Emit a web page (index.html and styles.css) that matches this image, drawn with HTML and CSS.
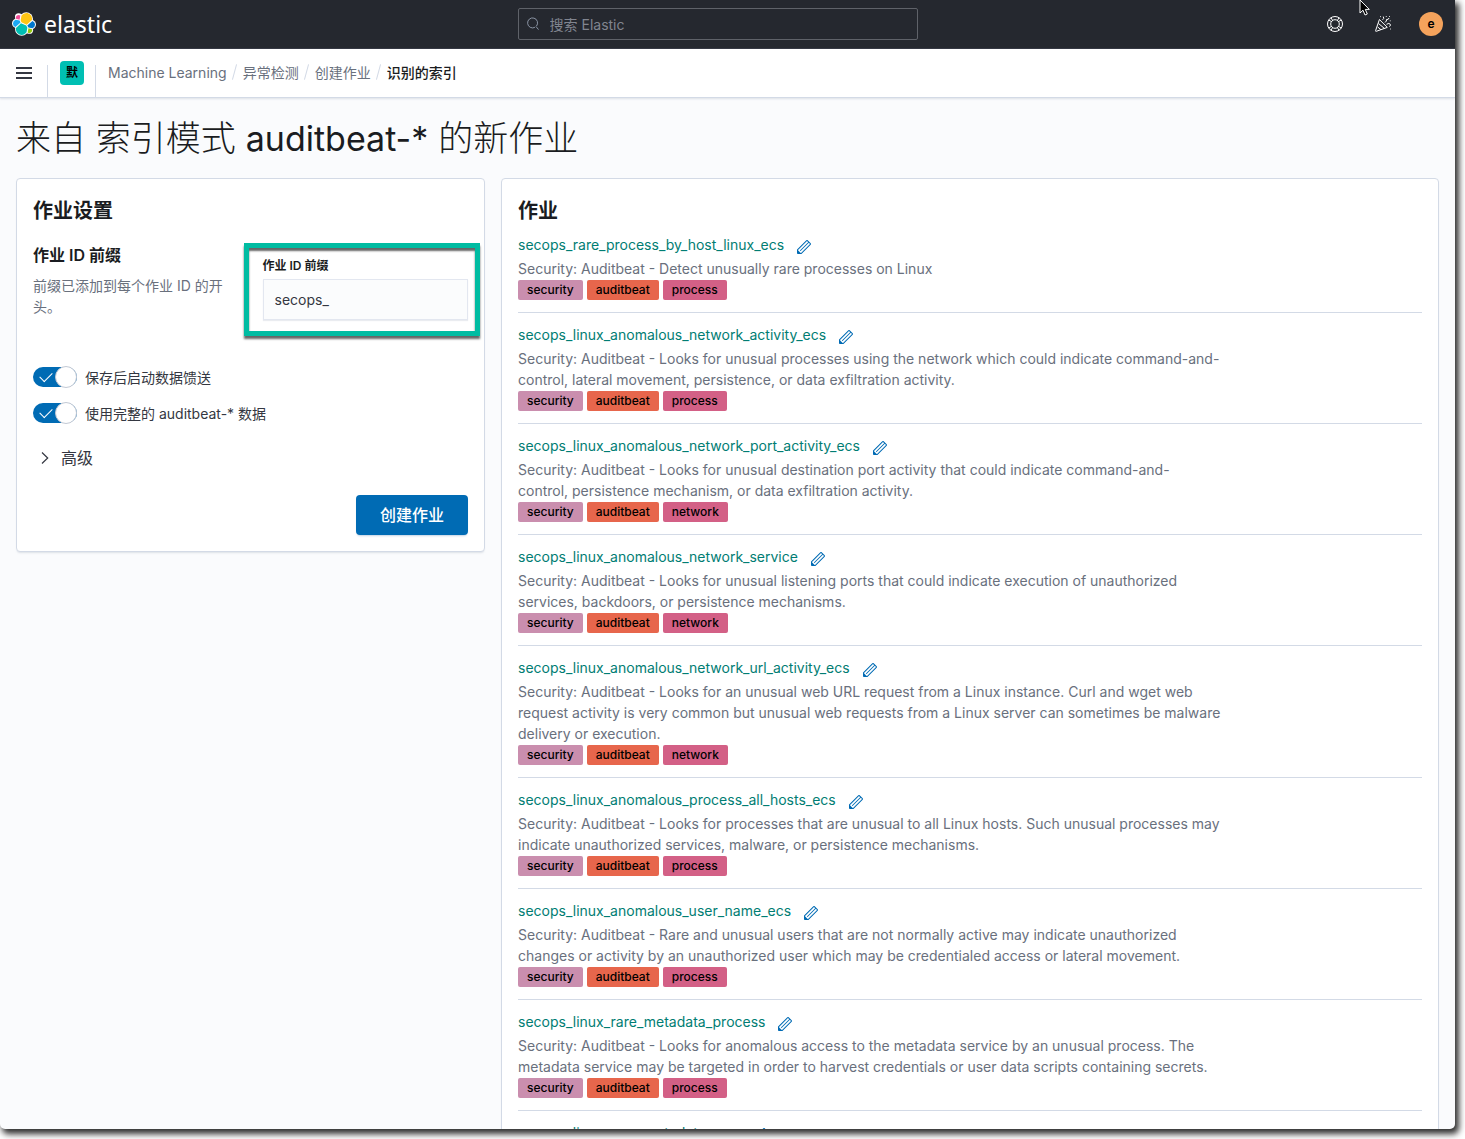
FILE: index.html
```html
<!DOCTYPE html>
<html lang="zh-CN">
<head>
<meta charset="utf-8">
<title>识别的索引 - Elastic</title>
<link rel="stylesheet" href="styles.css">
</head>
<body>
<svg class="sprite" aria-hidden="true">
  <symbol id="pencil" viewBox="0 0 16 16"><path fill-rule="evenodd" d="M12.148 3.148 11 2l-9 9v3h3l9-9-1.144-1.144-8.002 7.998a.502.502 0 0 1-.708 0 .502.502 0 0 1 0-.708l8.002-7.998zM11 1c.256 0 .512.098.707.293l3 3a.999.999 0 0 1 0 1.414l-9 9A.997.997 0 0 1 5 15H2a1 1 0 0 1-1-1v-3c0-.265.105-.52.293-.707l9-9A.997.997 0 0 1 11 1z"/><path d="M1.500 10.800 5.200 14.500H1.500z"/></symbol>
</svg>
<div class="app">
  <header class="topbar">
    <a class="brand" href="#">
      <svg class="brand-mark" viewBox="0 0 32 32" aria-hidden="true">
        <g fill="#fff"><circle cx="19" cy="9.200" r="9"/><circle cx="13" cy="22.800" r="9"/><circle cx="8.800" cy="6.600" r="4.900"/><circle cx="6.500" cy="15.200" r="6.500"/><circle cx="25.500" cy="16.800" r="6.500"/><circle cx="23.200" cy="24.200" r="4.900"/></g>
        <path fill="#fec514" d="M12.580 13.787l7.002 3.211 7.066-6.213a7.849 7.849 0 0 0 .152-1.557c0-4.287-3.464-7.762-7.737-7.762a7.722 7.722 0 0 0-6.377 3.366l-1.176 6.117 1.070 2.838z"/>
        <path fill="#00bfb3" d="M5.333 21.214a7.957 7.957 0 0 0-.15 1.577c0 4.300 3.474 7.786 7.760 7.786 2.578 0 4.992-1.280 6.437-3.420l1.166-6.098-1.556-2.985-7.030-3.214-6.627 6.354z"/>
        <path fill="#f04e98" d="M5.288 9.067l4.800 1.137L11.140 4.730a3.785 3.785 0 0 0-5.850 4.337z"/>
        <path fill="#1ba9f5" d="M4.872 10.214a5.294 5.294 0 0 0-3.595 5.003 5.300 5.300 0 0 0 3.400 4.946l6.733-6.100-1.236-2.650-5.302-1.200z"/>
        <path fill="#93c90e" d="M20.873 27.177a3.758 3.758 0 0 0 2.285.778 3.783 3.783 0 0 0 3.568-5.117l-4.800-1.122-1.053 5.461z"/>
        <path fill="#07c" d="M21.848 20.563l5.280 1.237a5.290 5.290 0 0 0 3.595-5.004 5.295 5.295 0 0 0-3.407-4.940l-6.905 6.054 1.437 2.653z"/>
      </svg>
      <span class="brand-name">elastic</span>
    </a>
    <label class="search">
      <svg class="search-icon" viewBox="0 0 16 16" aria-hidden="true"><path d="M10.200 11.800A5.700 5.700 0 1 1 12 10.300M11.300 10.700l3 3.700"/></svg>
      <input class="search-input" type="search" placeholder="搜索 Elastic" aria-label="搜索 Elastic">
    </label>
    <div class="tools">
      <button class="tool" type="button" aria-label="帮助">
        <svg class="tool-icon" viewBox="0 0 18 18"><circle cx="9" cy="9" r="7.500"/><circle cx="9" cy="9" r="4.300"/><path d="M5 2.800 6.700 5.600M2.800 5 5.600 6.700M13 2.800 11.300 5.600M15.200 5 12.400 6.700M5 15.200 6.700 12.400M2.800 13 5.600 11.300M13 15.200 11.300 12.400M15.200 13 12.400 11.300"/></svg>
      </button>
      <button class="tool" type="button" aria-label="新闻">
        <svg class="tool-icon" viewBox="0 0 18 18"><path d="M5.400 4.500 1.600 15.600q-.2.900.7.700L13.300 12.400zM4.500 8.500l6 5M3.700 12l3.300 2.700M8.500 4.800q2-1 .8-3.200M11 7.500q2-1.500 1.500-3 2 .5 2.500-1.500M12.500 9.300q2.700-1.800 3.800 0 .5 1.800-1 2.200"/><path d="M6 1.600h.8M11.800 1.500h.8M15 1.500h.8M15.800 5.800h.8M16 14h.8"/></svg>
      </button>
      <button class="tool" type="button" aria-label="elastic 用户"><span class="user">e</span></button>
    </div>
  </header>

  <nav class="subbar" aria-label="导航">
    <button class="cell" type="button" aria-label="菜单"><svg class="menu-icon" viewBox="0 0 16 12"><path d="M0 0h16v2H0zM0 5h16v2H0zM0 10h16v2H0z"/></svg></button>
    <button class="cell" type="button" aria-label="默认工作区"><span class="space">默</span></button>
    <ol class="crumbs">
      <li class="crumb"><a class="crumb-link" href="#">Machine Learning</a></li>
      <li class="crumb"><a class="crumb-link" href="#">异常检测</a></li>
      <li class="crumb"><a class="crumb-link" href="#">创建作业</a></li>
      <li class="crumb crumb-current" aria-current="page">识别的索引</li>
    </ol>
  </nav>

  <main class="page">
    <h1 class="page-title">来自 索引模式 <span class="pattern">auditbeat-*</span> 的新作业</h1>
    <div class="columns">
      <form class="panel settings">
        <h2 class="panel-title">作业设置</h2>
        <div class="group">
          <div class="about">
            <h3 class="about-title">作业 ID 前缀</h3>
            <p class="about-text">前缀已添加到每个作业 ID 的开头。</p>
          </div>
          <div class="field">
            <label class="field-label" for="prefix">作业 ID 前缀</label>
            <input class="field-input" id="prefix" type="text" value="secops_">
            <div class="highlight"></div>
          </div>
        </div>
        <div class="switches">
          <label class="switch"><input class="switch-input" type="checkbox" checked><span>保存后启动数据馈送</span></label>
          <label class="switch"><input class="switch-input" type="checkbox" checked><span>使用完整的 auditbeat-* 数据</span></label>
        </div>
        <button class="advanced" type="button"><svg class="chevron" viewBox="0 0 16 16" aria-hidden="true"><path d="M5 2.500 10.700 8 5 13.500"/></svg>高级</button>
        <button class="submit" type="button">创建作业</button>
      </form>

      <section class="panel jobs">
        <h2 class="panel-title">作业</h2>
        <ul class="job-list">
          <li class="job">
            <div class="job-head"><a class="job-id" href="#">secops_rare_process_by_host_linux_ecs</a><button class="edit" type="button" aria-label="编辑"><svg class="edit-icon"><use href="#pencil"/></svg></button></div>
            <p class="job-text">Security: Auditbeat - Detect unusually rare processes on Linux</p>
            <div class="badges"><span class="badge security">security</span><span class="badge auditbeat">auditbeat</span><span class="badge topic">process</span></div>
          </li>
          <li class="job">
            <div class="job-head"><a class="job-id" href="#">secops_linux_anomalous_network_activity_ecs</a><button class="edit" type="button" aria-label="编辑"><svg class="edit-icon"><use href="#pencil"/></svg></button></div>
            <p class="job-text">Security: Auditbeat - Looks for unusual processes using the network which could indicate command-and-control, lateral movement, persistence, or data exfiltration activity.</p>
            <div class="badges"><span class="badge security">security</span><span class="badge auditbeat">auditbeat</span><span class="badge topic">process</span></div>
          </li>
          <li class="job">
            <div class="job-head"><a class="job-id" href="#">secops_linux_anomalous_network_port_activity_ecs</a><button class="edit" type="button" aria-label="编辑"><svg class="edit-icon"><use href="#pencil"/></svg></button></div>
            <p class="job-text">Security: Auditbeat - Looks for unusual destination port activity that could indicate command-and-<br>control, persistence mechanism, or data exfiltration activity.</p>
            <div class="badges"><span class="badge security">security</span><span class="badge auditbeat">auditbeat</span><span class="badge topic">network</span></div>
          </li>
          <li class="job">
            <div class="job-head"><a class="job-id" href="#">secops_linux_anomalous_network_service</a><button class="edit" type="button" aria-label="编辑"><svg class="edit-icon"><use href="#pencil"/></svg></button></div>
            <p class="job-text">Security: Auditbeat - Looks for unusual listening ports that could indicate execution of unauthorized services, backdoors, or persistence mechanisms.</p>
            <div class="badges"><span class="badge security">security</span><span class="badge auditbeat">auditbeat</span><span class="badge topic">network</span></div>
          </li>
          <li class="job">
            <div class="job-head"><a class="job-id" href="#">secops_linux_anomalous_network_url_activity_ecs</a><button class="edit" type="button" aria-label="编辑"><svg class="edit-icon"><use href="#pencil"/></svg></button></div>
            <p class="job-text">Security: Auditbeat - Looks for an unusual web URL request from a Linux instance. Curl and wget web request activity is very common but unusual web requests from a Linux server can sometimes be malware delivery or execution.</p>
            <div class="badges"><span class="badge security">security</span><span class="badge auditbeat">auditbeat</span><span class="badge topic">network</span></div>
          </li>
          <li class="job">
            <div class="job-head"><a class="job-id" href="#">secops_linux_anomalous_process_all_hosts_ecs</a><button class="edit" type="button" aria-label="编辑"><svg class="edit-icon"><use href="#pencil"/></svg></button></div>
            <p class="job-text">Security: Auditbeat - Looks for processes that are unusual to all Linux hosts. Such unusual processes may indicate unauthorized services, malware, or persistence mechanisms.</p>
            <div class="badges"><span class="badge security">security</span><span class="badge auditbeat">auditbeat</span><span class="badge topic">process</span></div>
          </li>
          <li class="job">
            <div class="job-head"><a class="job-id" href="#">secops_linux_anomalous_user_name_ecs</a><button class="edit" type="button" aria-label="编辑"><svg class="edit-icon"><use href="#pencil"/></svg></button></div>
            <p class="job-text">Security: Auditbeat - Rare and unusual users that are not normally active may indicate unauthorized changes or activity by an unauthorized user which may be credentialed access or lateral movement.</p>
            <div class="badges"><span class="badge security">security</span><span class="badge auditbeat">auditbeat</span><span class="badge topic">process</span></div>
          </li>
          <li class="job">
            <div class="job-head"><a class="job-id" href="#">secops_linux_rare_metadata_process</a><button class="edit" type="button" aria-label="编辑"><svg class="edit-icon"><use href="#pencil"/></svg></button></div>
            <p class="job-text">Security: Auditbeat - Looks for anomalous access to the metadata service by an unusual process. The metadata service may be targeted in order to harvest credentials or user data scripts containing secrets.</p>
            <div class="badges"><span class="badge security">security</span><span class="badge auditbeat">auditbeat</span><span class="badge topic">process</span></div>
          </li>
          <li class="job">
            <div class="job-head"><a class="job-id" href="#">secops_linux_rare_metadata_user</a><button class="edit" type="button" aria-label="编辑"><svg class="edit-icon"><use href="#pencil"/></svg></button></div>
          </li>
        </ul>
      </section>
    </div>
  </main>
  <svg class="pointer" viewBox="0 0 12 18" aria-hidden="true"><path d="M1 1v13l3-2.800 2 4.800 2.300-1-2-4.600h4z"/></svg>
</div>
</body>
</html>
```
FILE: styles.css
```css
* { box-sizing: border-box; }

body {
  margin: 0;
  height: 100vh;
  padding: 0 10px 10px 0;
  background: #fff;
  color: #343741;
  font: 14px/21px Inter, "Noto Sans CJK SC", sans-serif;
}

button {
  border: 0;
  padding: 0;
  background: none;
  color: inherit;
  font: inherit;
  cursor: pointer;
}

a { text-decoration: none; }
h1, h2, h3, p, ul, ol { margin: 0; padding: 0; }
ul, ol { list-style: none; }

.sprite { position: absolute; width: 0; height: 0; }

.app {
  position: relative;
  height: 100%;
  overflow: hidden;
  background: #fafbfd;
  border-radius: 0 0 5px 5px;
  box-shadow: 3px 4px 6px 1px #000000d0;
}

/* Top bar */
.topbar {
  display: flex;
  align-items: center;
  justify-content: space-between;
  height: 49px;
  background: #25282f;
  border-bottom: 1px solid #343741;
}

.brand {
  display: flex;
  align-items: center;
  gap: 8px;
  padding: 0 12px;
  color: #fff;
}

.brand-mark { width: 24px; height: 24px; }
.brand-name { font: 23px/32px "Noto Sans", sans-serif; }

.search {
  display: flex;
  align-items: center;
  gap: 10px;
  width: 400px;
  height: 32px;
  padding: 0 7px;
  border: 1px solid #5f6269;
  border-radius: 2px;
}

.search-icon {
  flex: none;
  width: 14px;
  height: 14px;
  fill: none;
  stroke: #98a2b3;
}

.search-input {
  flex: 1;
  min-width: 0;
  border: 0;
  padding: 0;
  background: none;
  color: #fff;
  font: inherit;
  outline: 0;
}

.search-input::placeholder { color: #81858f; opacity: 1; }

.tools { display: flex; }

.tool {
  display: grid;
  place-items: center;
  width: 48px;
  height: 48px;
}

.tool-icon {
  width: 18px;
  height: 18px;
  fill: none;
  stroke: #fff;
  stroke-width: 1;
}

.user {
  width: 24px;
  border-radius: 50%;
  background: #f5a35c;
  color: #000;
  font-size: 12px;
  font-weight: 600;
  line-height: 24px;
}

/* Breadcrumb bar */
.subbar {
  position: relative;
  display: flex;
  height: 49px;
  background: #fff;
  border-bottom: 1px solid #d3dae6;
  box-shadow: 0 1px 2px #98a2b34d;
}

.cell {
  display: grid;
  place-items: center;
  width: 48px;
  background: linear-gradient(#d3dae6, #d3dae6) right bottom / 1px 32px no-repeat;
}

.menu-icon { width: 16px; height: 12px; fill: #343741; }

.space {
  width: 24px;
  border-radius: 4px;
  background: #00bfb3;
  color: #000;
  font-size: 12px;
  font-weight: 700;
  line-height: 24px;
}

.crumbs {
  display: flex;
  align-items: center;
  padding: 0 0 2px 12px;
  color: #69707d;
}

.crumb { display: flex; align-items: center; }
.crumb-link { color: inherit; }
.crumb-current { color: #1a1c21; font-weight: 500; }

.crumb:not(:last-child)::after {
  content: "";
  width: 1px;
  height: 16px;
  margin: 0 8px 0 7px;
  background: #d3dae6;
  transform: rotate(15deg);
}

/* Page */
.page { padding: 16px; }

.page-title {
  margin-bottom: 16px;
  color: #1a1c21;
  font-size: 35px;
  font-weight: 300;
  line-height: 48px;
}

.pattern { font-size: 34px; font-weight: 400; line-height: 1; }

.columns {
  display: grid;
  grid-template-columns: 1fr 2fr;
  align-items: start;
  gap: 16px;
}

.panel {
  padding: 16px;
  border: 1px solid #d3dae6;
  border-radius: 4px;
  background: #fff;
  box-shadow: 0 2px 2px -1px #98a2b34d;
}

.panel-title {
  color: #1a1c21;
  font-size: 20px;
  font-weight: 600;
  line-height: 32px;
}

/* Job settings */
.settings { display: flex; flex-direction: column; }

.group {
  display: grid;
  grid-template-columns: 1fr 1fr;
  gap: 24px;
  margin-top: 16px;
}

.about-title {
  margin-bottom: 8px;
  color: #1a1c21;
  font-size: 16px;
  font-weight: 600;
  line-height: 24px;
}

.about-text { color: #69707d; }

.field {
  position: relative;
  display: flex;
  flex-direction: column;
  gap: 4px;
  padding: 14px 0 16px;
}

.field-label {
  color: #1a1c21;
  font-size: 12px;
  font-weight: 600;
  line-height: 18px;
}

.field-input {
  width: 100%;
  height: 41px;
  padding: 0 11px;
  border: 1px solid #e3e7f0;
  border-radius: 0;
  background: #fbfcfd;
  color: #343741;
  font: inherit;
  box-shadow: 0 1px 1px #98a2b333;
}

.highlight {
  position: absolute;
  inset: 0 -12px 0 -19px;
  border: 5px solid #00bca2;
  box-shadow: 0 3px 2px #00000099, inset 0 3px 2px #00000099;
  pointer-events: none;
}

.switches {
  display: flex;
  flex-direction: column;
  gap: 16px;
  margin-top: 31px;
}

.switch {
  display: flex;
  align-items: center;
  gap: 8px;
  height: 20px;
}

.switch-input {
  appearance: none;
  width: 44px;
  height: 20px;
  margin: 0;
  border-radius: 10px;
  background: #006bb4;
  display: flex;
  align-items: center;
  justify-content: space-between;
}

.switch-input::before {
  content: "";
  width: 11px;
  height: 6px;
  margin: 0 0 4px 7px;
  border: solid #fff;
  border-width: 0 0 1px 1px;
  transform: rotate(-45deg);
}

.switch-input::after {
  content: "";
  width: 20px;
  height: 20px;
  border: 1px solid #c3c9d4;
  border-radius: 50%;
  background: #fff;
}

.advanced {
  display: flex;
  align-items: center;
  gap: 8px;
  align-self: flex-start;
  margin-top: 23px;
  padding-left: 4px;
  font-size: 16px;
  line-height: 24px;
}

.chevron {
  width: 16px;
  height: 16px;
  fill: none;
  stroke: #343741;
  stroke-width: 1.200;
}

.submit {
  align-self: flex-end;
  height: 40px;
  margin-top: 25px;
  padding: 0 24px;
  border-radius: 4px;
  background: #006bb4;
  color: #fff;
  font-size: 16px;
  font-weight: 500;
  box-shadow: 0 2px 2px -1px #366ba14d;
}

/* Job list */
.job-list { margin-top: 7px; }

.job:not(:last-child) {
  margin-bottom: 11px;
  padding-bottom: 12px;
  border-bottom: 1px solid #d3dae6;
}

.job-head { display: flex; gap: 8px; }
.job-id { color: #017d73; }

.edit {
  display: grid;
  place-items: center;
  width: 24px;
  height: 24px;
  padding-top: 2px;
}

.edit-icon { width: 16px; height: 16px; fill: #006bb4; }

.job-text { max-width: 704px; color: #69707d; }

.badges { display: flex; gap: 4px; margin-top: 1px; }

.badge {
  padding: 0 9px;
  border-radius: 2px;
  color: #000;
  font-size: 12px;
  font-weight: 500;
  line-height: 20px;
}

.security { background: #ca8eae; }
.auditbeat { background: #e7664c; }
.topic { background: #d36086; }

/* Mouse pointer floating above the bar */
.pointer {
  position: absolute;
  top: -1px;
  right: 84px;
  width: 12px;
  height: 18px;
  fill: #000;
  stroke: #fff;
}
```
